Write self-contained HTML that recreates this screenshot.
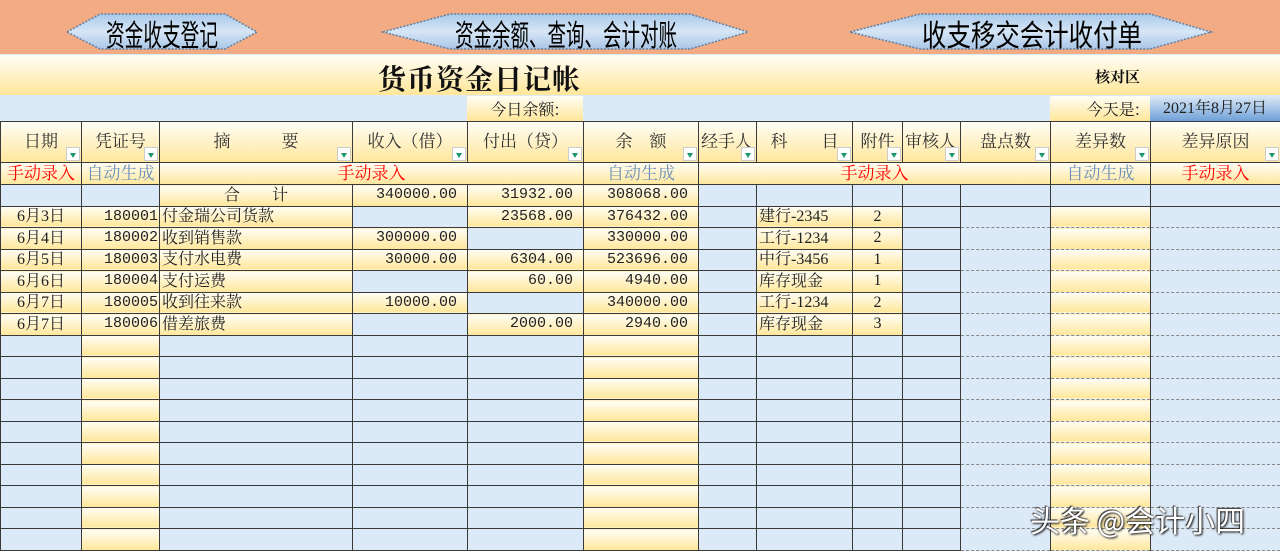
<!DOCTYPE html>
<html><head><meta charset="utf-8"><style>
*{margin:0;padding:0;box-sizing:border-box}
body{width:1280px;height:549px;overflow:hidden;background:#dce9f6;font-family:"Liberation Serif","Noto Serif CJK SC",serif;position:relative}
.g{background:linear-gradient(#fffef6,#ffe699)}
.b{background:#dce9f6}
#top{position:absolute;left:0;top:0;width:1280px;height:54px;background:#f2ab82}
#title{position:absolute;left:0;top:55px;width:1280px;height:40px}
#t1{position:absolute;left:378px;top:58px;font-size:28px;font-weight:bold;color:#111;letter-spacing:1px;font-family:"Noto Serif CJK SC",serif}
#t2{position:absolute;left:1095px;top:66px;font-size:15px;font-weight:bold;color:#111;font-family:"Noto Serif CJK SC",serif}
.abs{position:absolute}
table{position:absolute;left:0;top:121px;border-collapse:collapse;table-layout:fixed;width:1280px}
td{border:1px solid #3a3a3a;font-size:16px;color:#222;white-space:nowrap;overflow:hidden;padding:0 2px;height:21.5px;line-height:18px;position:relative;font-family:"Liberation Serif","Noto Serif CJK SC",serif;vertical-align:middle}
td>i{display:block;font-style:normal;height:19px;line-height:19px;overflow:visible}
tr.h td{height:41px;color:#333;text-align:center;font-size:17px}
tr.s td{height:22px;text-align:center;font-size:17px}
.r{color:#f00}.bl{color:#6a8fb8}
.n{text-align:right;font-family:"Liberation Mono",monospace;font-size:15px;padding-right:10px}
.c{text-align:center}
.dd{position:absolute;right:1px;bottom:1px;width:14px;height:14px;background:#fff;border:1px solid #ccc}
.dd:after{content:"";position:absolute;left:3px;top:5px;border-left:3.5px solid transparent;border-right:3.5px solid transparent;border-top:5px solid #1a9a6a}
td.d{border-top:1px dashed #888;border-bottom:1px dashed #888}
td.dl{border-left:1px dashed #888}
</style></head><body>
<div id="top"></div>
<svg class="abs" style="left:0;top:0" width="1280" height="54">
<defs><linearGradient id="bg" x1="0" y1="0" x2="0" y2="1"><stop offset="0" stop-color="#a9c9ea"/><stop offset="0.5" stop-color="#d6e6f6"/><stop offset="1" stop-color="#a9c6e6"/></linearGradient></defs>
<g stroke="#5c80a8" stroke-width="1.5" stroke-dasharray="2,1.5" fill="url(#bg)">
<polygon points="67,32 100,14 225,14 257,32 225,49 100,49"/>
<polygon points="383,32 450,14 690,14 748,32 690,49 450,49"/>
<polygon points="850,32 920,14 1150,14 1211,32 1150,49 920,49"/>
</g>
<g font-family="Noto Sans CJK SC,sans-serif" font-size="30" fill="#000">
<text x="106" y="46" textLength="112" lengthAdjust="spacingAndGlyphs">资金收支登记</text>
<text x="455" y="46" textLength="222" lengthAdjust="spacingAndGlyphs">资金余额、查询、会计对账</text>
<text x="922" y="46" textLength="220" lengthAdjust="spacingAndGlyphs">收支移交会计收付单</text>
</g></svg>
<div id="title" class="g"></div>
<div id="t1">货币资金日记帐</div>
<div id="t2">核对区</div>
<div class="abs g" style="left:467px;top:96px;width:116px;height:25px;font-size:16px;color:#222;text-align:center;line-height:25px;font-family:'Noto Serif CJK SC',serif">今日余额:</div>
<div class="abs g" style="left:1050px;top:96px;width:100px;height:25px;font-size:16px;color:#222;text-align:right;padding-right:10px;line-height:25px;font-family:'Noto Serif CJK SC',serif">今天是:</div>
<div class="abs" style="left:1150px;top:96px;width:130px;height:25px;font-size:16px;color:#222;text-align:center;line-height:25px;background:linear-gradient(#dce9f6,#6fa0d8)">2021年8月27日</div>
<table>
<colgroup><col style="width:81px"><col style="width:78px"><col style="width:193px"><col style="width:115px"><col style="width:116px"><col style="width:115px"><col style="width:58px"><col style="width:96px"><col style="width:50px"><col style="width:58px"><col style="width:90px"><col style="width:100px"><col style="width:130px"></colgroup>
<tr class="h g"><td>日期<span class="dd"></span></td><td>凭证号<span class="dd"></span></td><td>摘　　　要<span class="dd"></span></td><td>收入（借）<span class="dd"></span></td><td>付出（贷）<span class="dd"></span></td><td>余　额<span class="dd"></span></td><td style="text-align:left">经手人<span class="dd"></span></td><td>科　　目<span class="dd"></span></td><td>附件<span class="dd"></span></td><td style="text-align:left">审核人<span class="dd"></span></td><td>盘点数<span class="dd"></span></td><td class="dl">差异数<span class="dd"></span></td><td class="dl">差异原因<span class="dd"></span></td></tr>
<tr class="s g"><td class="r">手动录入</td><td class="bl">自动生成</td><td colspan="3" class="r">手动录入</td><td class="bl">自动生成</td><td colspan="5" class="r">手动录入</td><td class="bl dl">自动生成</td><td class="r dl">手动录入</td></tr>
<tr><td class="b"></td><td class="b"></td><td class="g c"><i>合　　计</i></td><td class="g n">340000.00</td><td class="g n">31932.00</td><td class="g n">308068.00</td><td class="b"></td><td class="b"></td><td class="b"></td><td class="b"></td><td class="b"></td><td class="b dl"></td><td class="b dl"></td></tr>
<tr><td class="g c"><i>6月3日</i></td><td class="g n" style="padding-right:1px">180001</td><td class="g"><i>付金瑞公司货款</i></td><td class="b"></td><td class="g n">23568.00</td><td class="g n">376432.00</td><td class="b"></td><td class="g"><i>建行-2345</i></td><td class="g c">2</td><td class="b"></td><td class="b d"></td><td class="g d dl"></td><td class="b d dl"></td></tr>
<tr><td class="g c"><i>6月4日</i></td><td class="g n" style="padding-right:1px">180002</td><td class="g"><i>收到销售款</i></td><td class="g n">300000.00</td><td class="b"></td><td class="g n">330000.00</td><td class="b"></td><td class="g"><i>工行-1234</i></td><td class="g c">2</td><td class="b"></td><td class="b d"></td><td class="g d dl"></td><td class="b d dl"></td></tr>
<tr><td class="g c"><i>6月5日</i></td><td class="g n" style="padding-right:1px">180003</td><td class="g"><i>支付水电费</i></td><td class="g n">30000.00</td><td class="g n">6304.00</td><td class="g n">523696.00</td><td class="b"></td><td class="g"><i>中行-3456</i></td><td class="g c">1</td><td class="b"></td><td class="b d"></td><td class="g d dl"></td><td class="b d dl"></td></tr>
<tr><td class="g c"><i>6月6日</i></td><td class="g n" style="padding-right:1px">180004</td><td class="g"><i>支付运费</i></td><td class="b"></td><td class="g n">60.00</td><td class="g n">4940.00</td><td class="b"></td><td class="g"><i>库存现金</i></td><td class="g c">1</td><td class="b"></td><td class="b d"></td><td class="g d dl"></td><td class="b d dl"></td></tr>
<tr><td class="g c"><i>6月7日</i></td><td class="g n" style="padding-right:1px">180005</td><td class="g"><i>收到往来款</i></td><td class="g n">10000.00</td><td class="b"></td><td class="g n">340000.00</td><td class="b"></td><td class="g"><i>工行-1234</i></td><td class="g c">2</td><td class="b"></td><td class="b d"></td><td class="g d dl"></td><td class="b d dl"></td></tr>
<tr><td class="g c"><i>6月7日</i></td><td class="g n" style="padding-right:1px">180006</td><td class="g"><i>借差旅费</i></td><td class="b"></td><td class="g n">2000.00</td><td class="g n">2940.00</td><td class="b"></td><td class="g"><i>库存现金</i></td><td class="g c">3</td><td class="b"></td><td class="b d"></td><td class="g d dl"></td><td class="b d dl"></td></tr>
<tr><td class="b"></td><td class="g"></td><td class="b"></td><td class="b"></td><td class="b"></td><td class="g"></td><td class="b"></td><td class="b"></td><td class="b"></td><td class="b"></td><td class="b d"></td><td class="g d dl"></td><td class="b d dl"></td></tr>
<tr><td class="b"></td><td class="g"></td><td class="b"></td><td class="b"></td><td class="b"></td><td class="g"></td><td class="b"></td><td class="b"></td><td class="b"></td><td class="b"></td><td class="b d"></td><td class="g d dl"></td><td class="b d dl"></td></tr>
<tr><td class="b"></td><td class="g"></td><td class="b"></td><td class="b"></td><td class="b"></td><td class="g"></td><td class="b"></td><td class="b"></td><td class="b"></td><td class="b"></td><td class="b d"></td><td class="g d dl"></td><td class="b d dl"></td></tr>
<tr><td class="b"></td><td class="g"></td><td class="b"></td><td class="b"></td><td class="b"></td><td class="g"></td><td class="b"></td><td class="b"></td><td class="b"></td><td class="b"></td><td class="b d"></td><td class="g d dl"></td><td class="b d dl"></td></tr>
<tr><td class="b"></td><td class="g"></td><td class="b"></td><td class="b"></td><td class="b"></td><td class="g"></td><td class="b"></td><td class="b"></td><td class="b"></td><td class="b"></td><td class="b d"></td><td class="g d dl"></td><td class="b d dl"></td></tr>
<tr><td class="b"></td><td class="g"></td><td class="b"></td><td class="b"></td><td class="b"></td><td class="g"></td><td class="b"></td><td class="b"></td><td class="b"></td><td class="b"></td><td class="b d"></td><td class="g d dl"></td><td class="b d dl"></td></tr>
<tr><td class="b"></td><td class="g"></td><td class="b"></td><td class="b"></td><td class="b"></td><td class="g"></td><td class="b"></td><td class="b"></td><td class="b"></td><td class="b"></td><td class="b d"></td><td class="g d dl"></td><td class="b d dl"></td></tr>
<tr><td class="b"></td><td class="g"></td><td class="b"></td><td class="b"></td><td class="b"></td><td class="g"></td><td class="b"></td><td class="b"></td><td class="b"></td><td class="b"></td><td class="b d"></td><td class="g d dl"></td><td class="b d dl"></td></tr>
<tr><td class="b"></td><td class="g"></td><td class="b"></td><td class="b"></td><td class="b"></td><td class="g"></td><td class="b"></td><td class="b"></td><td class="b"></td><td class="b"></td><td class="b d"></td><td class="g d dl"></td><td class="b d dl"></td></tr>
<tr><td class="b"></td><td class="g"></td><td class="b"></td><td class="b"></td><td class="b"></td><td class="g"></td><td class="b"></td><td class="b"></td><td class="b"></td><td class="b"></td><td class="b d"></td><td class="g d dl"></td><td class="b d dl"></td></tr>
</table>
<div class="abs" style="left:1030px;top:497px;font-size:30px;color:#fff;font-family:'Noto Sans CJK SC',sans-serif;text-shadow:1px 1px 2px #000,-1px -1px 1px #333">头条 @会计小四</div>
</body></html>
